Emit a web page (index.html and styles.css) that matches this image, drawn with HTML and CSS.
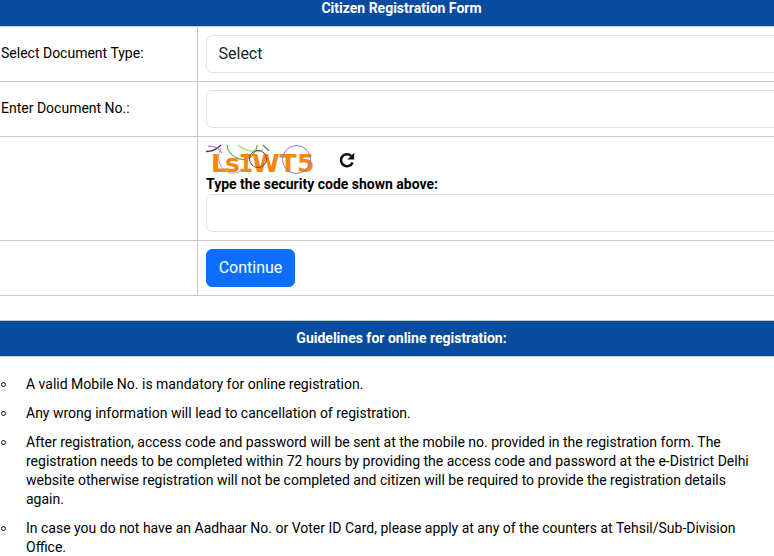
FILE: index.html
```html
<!DOCTYPE html>
<html lang="en">
  <head>
    <meta charset="UTF-8" />
    <meta name="viewport" content="width=device-width, initial-scale=1.0" />
    <title>Citizen Registration Form</title>
    <link rel="stylesheet" href="styles.css">
  </head>
  <body>
    <div class="page">
      <form class="reg-form" id="regForm">
        <h1 class="section-title">Citizen Registration Form</h1>
        <div class="form-row">
          <label class="form-label" for="docType">Select Document Type:</label>
          <div class="form-field">
            <select class="form-control" id="docType" name="docType">
              <option>Select</option>
            </select>
          </div>
        </div>
        <div class="form-row">
          <label class="form-label" for="docNo">Enter Document No.:</label>
          <div class="form-field">
            <input class="form-control" type="text" id="docNo" name="docNo" />
          </div>
        </div>
        <div class="form-row">
          <div class="form-label"></div>
          <div class="form-field">
            <div class="captcha">
              <svg class="captcha-img" width="110" height="30" viewBox="0 0 110 30">
                <g fill="none" stroke-width="1">
                  <path d="M0 6.5 Q9 6.5 15 0" stroke="#5b2a6e" stroke-width="1.3" />
                  <path d="M2 1 Q12 1 16 8" stroke="#a65bb5" />
                  <path d="M21 0 C22 10 35 19 45 12 Q51 6 51 0" stroke="#72b06a" stroke-width="1.3" />
                  <path d="M32 0 Q42 9 57 5" stroke="#a5e06a" stroke-width="1.3" />
                  <path d="M57 0 L63 6" stroke="#3f8f3f" stroke-width="1.3" />
                </g>
                <text class="captcha-text" y="27" x="5 19 32.5 46 73.5 91">Ls<tspan class="captcha-serif">I</tspan>WT5</text>
                <g fill="none" stroke-width="1">
                  <path d="M15 3 C9 14 15 28 27 28 C38 28 44 20 41 8" stroke="#b59a91" />
                  <circle cx="52" cy="14" r="8.5" stroke="#7d3c46" />
                  <circle cx="90.5" cy="14.5" r="14" stroke="#8c75c9" />
                </g>
              </svg>
              <svg class="refresh-icon" width="16" height="16" viewBox="0 0 16 16">
                <path d="M12.2 3.8 A6 6 0 1 0 13.6 10.5" fill="none" stroke="#111" stroke-width="2.5" />
                <path d="M15.2 0.8 V7.6 H8.4 Z" fill="#111" />
              </svg>
            </div>
            <label class="captcha-label" for="captcha">Type the security code shown above:</label>
            <input class="form-control" type="text" id="captcha" name="captcha" />
          </div>
        </div>
        <div class="form-row">
          <div class="form-label"></div>
          <div class="form-field">
            <button type="button" class="continue-btn">Continue</button>
          </div>
        </div>
      </form>

      <div class="guidelines">
        <h2 class="section-title">Guidelines for online registration:</h2>
        <ul class="guideline-list">
          <li>A valid Mobile No. is mandatory for online registration.</li>
          <li>Any wrong information will lead to cancellation of registration.</li>
          <li>After registration, access code and password will be sent at the mobile no. provided in the registration form. The registration needs to be completed within 72 hours by providing the access code and password at the e-District Delhi website otherwise registration will not be completed and citizen will be required to provide the registration details again.</li>
          <li>In case you do not have an Aadhaar No. or Voter ID Card, please apply at any of the counters at Tehsil/Sub-Division Office.</li>
        </ul>
      </div>
    </div>
  </body>
</html>
```

FILE: styles.css
```css
* {
  margin: 0;
  padding: 0;
  box-sizing: border-box;
}

body {
  font-family: Roboto, "Liberation Sans", sans-serif;
  font-size: 14px;
  line-height: 19px;
  color: #000;
  background-color: #fff;
  height: 556px;
  overflow: hidden;
}

.page {
  width: 817px;
  margin: -10px 0 0 -7px;
}

.section-title {
  padding: 8px;
  font-size: 14px;
  font-weight: 700;
  line-height: 19px;
  text-align: center;
  color: #fff;
  background-color: #084c9e;
  border-top: 1px solid #c8c8c8;
  border-bottom: 1px solid #c8c8c8;
}

.form-row {
  display: flex;
  border-bottom: 1px solid #c8c8c8;
}

.form-label {
  display: flex;
  align-items: center;
  width: 205px;
  padding: 8px 8px 10px;
  border-right: 1px solid #c8c8c8;
}

.form-field {
  flex: 1;
  padding: 8px;
}

.form-control {
  display: block;
  width: 100%;
  height: 38px;
  padding: 6px 11.5px;
  font-family: inherit;
  font-size: 16px;
  line-height: 24px;
  color: #212529;
  background-color: #fff;
  border: 1px solid #dee2e6;
  border-radius: 6px;
  appearance: none;
}

.captcha {
  display: flex;
  align-items: center;
  gap: 23px;
  height: 30px;
}

.captcha-img {
  overflow: visible;
}

.captcha-text {
  font-family: "DejaVu Sans", sans-serif;
  font-size: 25px;
  font-weight: 700;
  fill: #f7860f;
}

.captcha-serif {
  font-family: "DejaVu Sans Mono", monospace;
}

.captcha-label {
  display: block;
  font-weight: 700;
}

.continue-btn {
  display: block;
  width: 89px;
  height: 38px;
  padding: 6px 11px;
  font-family: inherit;
  font-size: 16px;
  line-height: 24px;
  color: #fff;
  background-color: #0d6efd;
  border: 1px solid #0d6efd;
  border-radius: 6px;
}

.guidelines {
  margin-top: 24px;
}

.guideline-list {
  width: 770px;
  padding: 18px 0 0 33px;
  list-style: none;
}

.guideline-list li {
  position: relative;
  margin-bottom: 10px;
}

.guideline-list li::before {
  content: "";
  position: absolute;
  left: -25px;
  top: 7px;
  width: 5px;
  height: 5px;
  box-sizing: border-box;
  border: 1px solid #111;
  border-radius: 50%;
}
```
